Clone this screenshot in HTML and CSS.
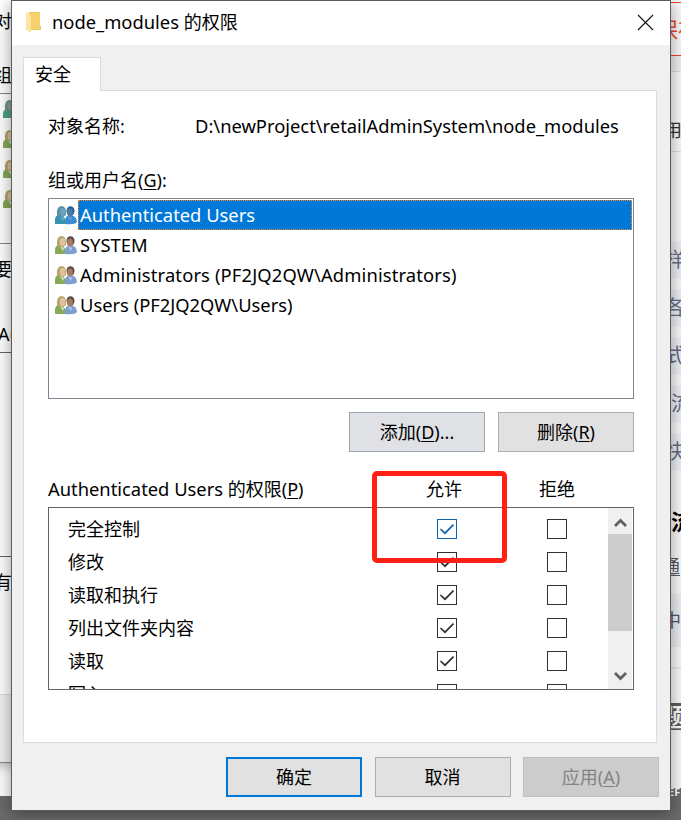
FILE: index.html
```
<!DOCTYPE html>
<html lang="zh-CN">

<head>
  <meta charset="UTF-8">
  <meta name="viewport" content="width=device-width, initial-scale=1.0">
  <title>node_modules 的权限</title>
  <link rel="stylesheet" href="styles.css">
</head>

<body>
  <!-- 共用图标 -->
  <svg class="defs" width="0" height="0">
    <symbol id="users" viewBox="0 0 22 19">
      <path d="M0 18V14Q0 9 5 9Q11 10 11 18Z" fill="#86aa59"/>
      <path d="M2 10Q1 1 6 0Q12 0 11 9L8 11Z" fill="#b5a568"/>
      <ellipse cx="7.5" cy="6" rx="2.8" ry="4" fill="#dfc1a0"/>
      <path d="M5 10L9 12L8 15Z" fill="#d8e6c4"/>
      <path d="M10 18V15Q10 10 15 9Q22 10 22 16Q20 19 10 18Z" fill="#7c9fcf"/>
      <ellipse cx="15.5" cy="5" rx="4" ry="4.8" fill="#5b4a43"/>
      <ellipse cx="15" cy="6.5" rx="2.9" ry="4" fill="#a87b60"/>
      <path d="M13 10L16 12L17 10L16 15Z" fill="#c5d8ef"/>
    </symbol>
    <symbol id="users-on" viewBox="0 0 22 19">
      <path d="M0 18V14Q0 9 5 9Q11 10 11 18Z" fill="#3692ad"/>
      <path d="M2 10Q1 1 6 0Q12 0 11 9L8 11Z" fill="#5290a3"/>
      <ellipse cx="7.5" cy="6" rx="2.8" ry="4" fill="#709fba"/>
      <path d="M5 10L9 12L8 15Z" fill="#6cb0d0"/>
      <path d="M10 18V15Q10 10 15 9Q22 10 22 16Q20 19 10 18Z" fill="#3b8bd0"/>
      <ellipse cx="15.5" cy="5" rx="4" ry="4.8" fill="#28608f"/>
      <ellipse cx="15" cy="6.5" rx="2.9" ry="4" fill="#4a7ca1"/>
      <path d="M13 10L16 12L17 10L16 15Z" fill="#64aee4"/>
    </symbol>
    <symbol id="users-dim" viewBox="0 0 22 19">
      <path d="M0 18V14Q0 9 5 9Q11 10 11 18Z" fill="#4fa283"/>
      <path d="M2 10Q1 1 6 0Q12 0 11 9L8 11Z" fill="#6f9488"/>
      <ellipse cx="7.5" cy="6" rx="2.8" ry="4" fill="#8d9c9c"/>
    </symbol>
    <symbol id="check" viewBox="0 0 18 18">
      <path d="M2.5 9L7 13.2L15.5 4.7" fill="none" stroke="currentColor" stroke-width="1.7"/>
    </symbol>
  </svg>

  <!-- 右侧网页 -->
  <div class="taskbar"></div>
  <div class="page">
    <div class="save">保存</div>
    <div class="bar"></div>
    <div class="use">用</div>
    <div class="tags">
      <span>样</span>
      <span>各</span>
      <span>式</span>
      <span>流</span>
      <span>快</span>
    </div>
    <b class="flow">流</b>
    <u class="link">通</u>
    <div class="block">中</div>
    <div class="rule"></div>
    <b class="topic">题</b>
    <b class="ef">EF</b>
  </div>

  <!-- 后面的属性窗口 -->
  <div class="behind">
    <div class="behind-text name">对</div>
    <div class="behind-text group">组</div>
    <div class="behind-list">
      <svg><use href="#users-dim"/></svg>
      <svg><use href="#users"/></svg>
      <svg><use href="#users"/></svg>
      <svg><use href="#users"/></svg>
    </div>
    <div class="behind-text change">要</div>
    <div class="behind-text auth">Au</div>
    <div class="behind-perms"></div>
    <div class="behind-text more">有</div>
    <div class="behind-foot"></div>
  </div>

  <div class="dialog">
    <div class="titlebar">
      <svg class="folder" width="16" height="22" viewBox="0 0 16 22">
        <path d="M3 0H14V13L15 14V18H3Z" fill="#f0c75e"/>
        <path d="M5 1H14V17H5Z" fill="#f5d06f"/>
        <path d="M0 0L5 3V21L0 18Z" fill="#ffe6a0"/>
      </svg>
      <span class="title"><span class="en">node_modules</span> 的权限</span>
      <svg class="close" width="17" height="17" viewBox="0 0 17 17">
        <path d="M1 1L16 16M16 1L1 16" stroke="#111" stroke-width="1.1"/>
      </svg>
    </div>

    <div class="content">
      <div class="tab">安全</div>
      <div class="panel">
        <div class="object">
          <span class="object-label">对象名称:</span>
          <span class="en path">D:\newProject\retailAdminSystem\node_modules</span>
        </div>
        <div class="group-label">组或用户名(<u>G</u>):</div>
        <div class="list">
          <div class="item selected"><svg><use href="#users-on"/></svg><span class="en">Authenticated Users</span></div>
          <div class="item"><svg><use href="#users"/></svg><span class="en">SYSTEM</span></div>
          <div class="item"><svg><use href="#users"/></svg><span class="en">Administrators (PF2JQ2QW\Administrators)</span></div>
          <div class="item"><svg><use href="#users"/></svg><span class="en">Users (PF2JQ2QW\Users)</span></div>
        </div>
        <div class="actions">
          <button class="btn hover">添加(<u>D</u>)...</button>
          <button class="btn">删除(<u>R</u>)</button>
        </div>

        <div class="perm-head">
          <span><span class="en">Authenticated Users</span> 的权限(<u>P</u>)</span>
          <span>允许</span>
          <span>拒绝</span>
        </div>
        <div class="perms">
          <div class="rows">
            <div class="row"><span>完全控制</span><i class="box active"><svg><use href="#check"/></svg></i><i class="box"></i></div>
            <div class="row"><span>修改</span><i class="box"><svg><use href="#check"/></svg></i><i class="box"></i></div>
            <div class="row"><span>读取和执行</span><i class="box"><svg><use href="#check"/></svg></i><i class="box"></i></div>
            <div class="row"><span>列出文件夹内容</span><i class="box"><svg><use href="#check"/></svg></i><i class="box"></i></div>
            <div class="row"><span>读取</span><i class="box"><svg><use href="#check"/></svg></i><i class="box"></i></div>
            <div class="row"><span>写入</span><i class="box"><svg><use href="#check"/></svg></i><i class="box"></i></div>
          </div>
          <div class="scroll">
            <svg width="24" height="26" viewBox="0 0 24 26"><path d="M7 18L12.5 12.5L18 18" fill="none" stroke="#606060" stroke-width="2.8"/></svg>
            <div class="thumb"></div>
            <svg width="24" height="26" viewBox="0 0 24 26"><path d="M7 10L12.5 15.5L18 10" fill="none" stroke="#606060" stroke-width="2.8"/></svg>
          </div>
        </div>
      </div>
    </div>

    <div class="footer">
      <button class="btn primary">确定</button>
      <button class="btn">取消</button>
      <button class="btn" disabled>应用(<u>A</u>)</button>
    </div>
  </div>

  <!-- 红框标注 -->
  <div class="mark"></div>
</body>

</html>
```
FILE: styles.css
```
* {
  box-sizing: border-box;
}

body {
  position: relative;
  width: 681px;
  height: 820px;
  margin: 0;
  overflow: hidden;
  background: #fff;
  color: #000;
  font: 18px/24px "Noto Sans", "Noto Sans CJK SC", sans-serif;
}

svg {
  display: block;
  flex: none;
}

u {
  text-underline-offset: 2px;
  text-decoration-thickness: 1px;
}

.defs {
  position: absolute;
}

.en {
  font-size: 18.35px;
}

/* 右侧网页 */
.page {
  position: absolute;
  top: 0;
  left: 650px;
  width: 31px;
  height: 796px;
  padding-left: 10px;
  background: #fafafa;
  overflow: hidden;
}

.save {
  height: 54px;
  margin: 2px 0 0 -10px;
  padding-left: 6px;
  border: solid #f0452c;
  border-width: 1px 0;
  color: #f0452c;
  font-size: 22px;
  line-height: 52px;
  white-space: nowrap;
}

.bar {
  height: 16px;
  background: #f0f0f0;
  border-bottom: 1px solid #ddd;
}

.use {
  height: 80px;
  padding-left: 4px;
  border-bottom: 1px solid #ddd;
  color: #333;
  line-height: 116px;
}

.tags {
  display: grid;
  gap: 12px;
  margin-top: 90px;
}

.tags span {
  height: 36px;
  padding-left: 5px;
  background: #edf1f6;
  color: #676b87;
  font-size: 20px;
  line-height: 36px;
}

.tags span:nth-child(4) {
  padding-left: 11px;
}

.flow {
  display: block;
  height: 36px;
  margin-top: 34px;
  padding-left: 11px;
  font-size: 22px;
  line-height: 34px;
}

.link {
  display: block;
  height: 36px;
  margin-top: 9px;
  padding-left: 2px;
  color: #555867;
  line-height: 34px;
}

.block {
  height: 53px;
  margin-top: 9px;
  padding-left: 3px;
  background: #eceef2;
  color: #555867;
  line-height: 53px;
}

.rule {
  height: 22px;
  border-bottom: 2px solid #e8e8e8;
}

.topic {
  display: block;
  height: 27px;
  margin-top: 34px;
  padding-left: 1px;
  background: #5c5c5c;
  color: #fff;
  font-size: 24px;
  line-height: 27px;
}

.ef {
  display: block;
  height: 8px;
  margin-top: 58px;
  padding-left: 8px;
  background: #6b6b6b;
  color: #fff;
  font-size: 11px;
  line-height: 8px;
}

.taskbar {
  position: absolute;
  bottom: 0;
  left: 0;
  width: 681px;
  height: 24px;
  background: #6b6b6b;
}

/* 后面的窗口 */
.behind {
  position: absolute;
  top: -1px;
  left: -20px;
  width: 600px;
  height: 764px;
  background: #fff;
  border-bottom: 1px solid #888;
  box-shadow: 0 2px 12px rgba(0, 0, 0, .3);
}

.behind-text {
  padding-left: 14px;
}

.name {
  margin-top: 10px;
}

.group {
  margin-top: 30px;
}

.behind-list {
  height: 151px;
  margin-top: 6px;
  padding: 6px 0 0 23px;
  border: solid #82858f;
  border-width: 1px 0;
}

.behind-list svg {
  width: 22px;
  height: 19px;
  margin-bottom: 11px;
}

.change {
  margin-top: 13px;
}

.auth {
  margin-top: 41px;
  padding-left: 18px;
}

.behind-perms {
  height: 205px;
  margin-top: 6px;
  border: solid #646464;
  border-width: 1px 0;
}

.more {
  margin-top: 13px;
}

.behind-foot {
  height: 68px;
  margin-top: 100px;
  background: #f0f0f0;
  border-top: 1px solid #dcdcdc;
}

/* 权限对话框 */
.dialog {
  position: absolute;
  top: 0;
  left: 11px;
  width: 660px;
  height: 811px;
  background: #f0f0f0;
  border: 1px solid #5c5c5c;
  box-shadow: 0 3px 16px rgba(0, 0, 0, .4);
}

.titlebar {
  display: flex;
  align-items: center;
  height: 44px;
  padding: 0 16px 0 14px;
  background: #fff;
}

.title {
  margin: 0 0 2px 10px;
}

.close {
  margin: 0 0 2px auto;
}

.content {
  padding: 12px 13px 0 11px;
}

.tab {
  position: relative;
  width: 78px;
  height: 34px;
  margin-bottom: -1px;
  padding-left: 11px;
  background: #fff;
  border: 1px solid #dcdcdc;
  border-bottom: none;
  line-height: 32px;
}

.panel {
  height: 653px;
  padding: 24px 22px 0 24px;
  background: #fff;
  border: 1px solid #dcdcdc;
}

.object {
  display: flex;
  height: 24px;
  line-height: 22px;
}

.object-label {
  width: 147px;
}

.group-label {
  height: 24px;
  margin-top: 30px;
  line-height: 22px;
}

.list {
  height: 201px;
  margin-top: 5px;
  padding: 1px;
  border: 1px solid #82858f;
}

.item {
  display: flex;
  align-items: center;
  height: 30px;
  padding-left: 5px;
}

.item svg {
  width: 22px;
  height: 19px;
}

.item .en {
  flex: 1;
  height: 30px;
  margin-left: 1px;
  padding-left: 2px;
  line-height: 30px;
}

.item:nth-child(3) .en {
  letter-spacing: .15px;
}

.selected .en {
  background: #0078d7;
  color: #fff;
  outline: 1px dotted #ff8728;
  outline-offset: -1px;
}

.actions {
  display: flex;
  justify-content: flex-end;
  gap: 13px;
  margin-top: 13px;
}

.btn {
  width: 136px;
  height: 40px;
  padding: 0;
  background: #e1e1e1;
  border: 1px solid #adadad;
  color: #000;
  font: inherit;
}

.btn.hover {
  background: #dfe1e4;
  border-color: #9ba6b1;
}

.btn.primary {
  border: 2px solid #0078d7;
}

.btn:disabled {
  background: #ccc;
  border-color: #bfbfbf;
  color: #838383;
}

.perm-head {
  display: grid;
  grid-template-columns: 378px 113px 1fr;
  height: 24px;
  margin-top: 25px;
}

.perms {
  display: flex;
  height: 183px;
  margin-top: 6px;
  padding-right: 1px;
  border: 1px solid #646464;
  overflow: hidden;
}

.rows {
  flex: 1;
  padding: 4px 0 0 19px;
}

.row {
  display: grid;
  grid-template-columns: 369px 110px 1fr;
  height: 33px;
  line-height: 34px;
}

.box {
  width: 20px;
  height: 20px;
  margin-top: 7px;
  border: 1px solid #333;
  color: #333;
}

.box svg {
  width: 18px;
  height: 18px;
}

.box.active {
  border-color: #0f64af;
  color: #0f64af;
}

.scroll {
  display: flex;
  flex-direction: column;
  width: 24px;
  background: #f0f0f0;
}

.scroll svg:last-child {
  margin-top: auto;
}

.thumb {
  height: 97px;
  background: #cdcdcd;
}

.footer {
  display: flex;
  justify-content: flex-end;
  gap: 12.5px;
  padding: 14px 11px 0 0;
}

.mark {
  position: absolute;
  top: 471px;
  left: 372px;
  width: 135px;
  height: 92px;
  border: 5px solid #ff2015;
  border-radius: 5px;
}
```
